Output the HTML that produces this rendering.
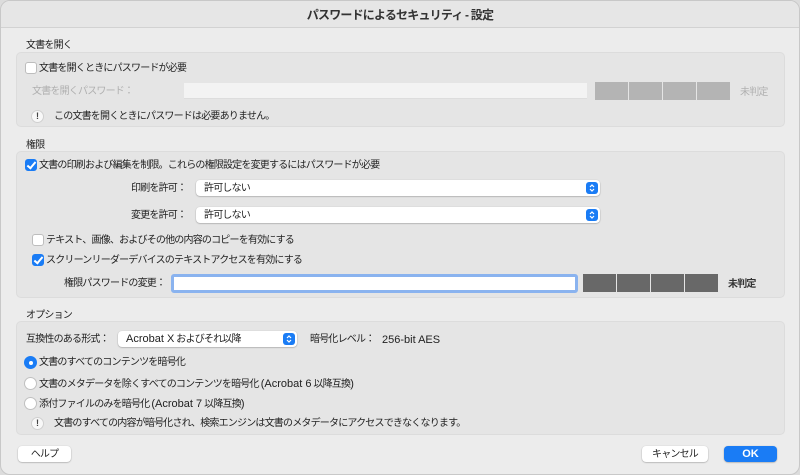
<!DOCTYPE html>
<html><head><meta charset="utf-8"><style>
*{box-sizing:border-box;margin:0;padding:0}
body{width:800px;height:475px;background:#dcdcdc;font-family:"Liberation Sans","Noto Sans CJK JP",sans-serif;font-size:10px;letter-spacing:-0.8px;color:#222;position:relative;overflow:hidden}
.win{position:absolute;left:0;top:0;width:800px;height:475px;background:#ececec;border:1px solid #c8c8c8;border-radius:10px;overflow:hidden}
.title{position:absolute;left:0;top:0;width:100%;height:27px;background:#e6e6e6;border-bottom:1px solid #d2d2d2;text-align:center;font-weight:bold;font-size:12px;line-height:28px;color:#333}
.a{position:absolute;white-space:nowrap;line-height:16px}
.l{letter-spacing:0;font-size:11px}
.box{position:absolute;left:15px;width:769px;background:#e5e5e5;border:1px solid #dcdcdc;border-radius:5px}
.cb{position:absolute;width:12px;height:12px;border-radius:3px;background:#fff;border:1px solid #bdbdbd}
.cb.on{background:#1a7cf5;border-color:#1a7cf5}
.cb.on:after{content:"";position:absolute;left:3px;top:0px;width:3px;height:7px;border:solid #fff;border-width:0 2px 2px 0;transform:rotate(40deg)}
.rd{position:absolute;width:13px;height:13px;border-radius:50%;background:#fff;border:1px solid #c0c0c0}
.rd.on{background:#1a7cf5;border-color:#1a7cf5}
.rd.on:after{content:"";position:absolute;left:3.5px;top:3.5px;width:4px;height:4px;border-radius:50%;background:#fff}
.sel{position:absolute;background:#fff;border-radius:4px;box-shadow:0 0.5px 1.5px rgba(0,0,0,.35);padding-left:8px;line-height:17px;height:16px}
.sel svg{position:absolute;right:2px;top:2px}
.bar{position:absolute;height:18px;width:33px}
.warn{position:absolute;width:13px;height:13px;border-radius:50%;background:#f8f8f8;border:1px solid #d0d0d0;font-size:9px;font-weight:bold;text-align:center;line-height:11px;color:#444;letter-spacing:0}
.btn{position:absolute;height:16px;border-radius:4px;background:#fff;box-shadow:0 0.5px 1.5px rgba(0,0,0,.35);text-align:center;line-height:17px}
.g{color:#b0b0b0}
</style></head><body><div class="win">
<div class="title">パスワードによるセキュリティ - 設定</div>

<div class="a" style="left:25px;top:37px">文書を開く</div>
<div class="box" style="top:51px;height:75px"></div>
<div class="cb" style="left:24px;top:61px"></div>
<div class="a" style="left:38px;top:60px">文書を開くときにパスワードが必要</div>
<div class="a g" style="left:31px;top:83px">文書を開くパスワード：</div>
<div class="a" style="left:183px;top:82px;width:403px;height:16px;background:#f3f3f3;border-bottom:1px solid #ddd"></div>
<div class="bar" style="left:594px;top:81px;background:#b4b4b4"></div>
<div class="bar" style="left:628px;top:81px;background:#b4b4b4"></div>
<div class="bar" style="left:662px;top:81px;background:#b4b4b4"></div>
<div class="bar" style="left:696px;top:81px;background:#b4b4b4"></div>
<div class="a g" style="left:739px;top:84px">未判定</div>
<div class="warn" style="left:30px;top:109px">!</div>
<div class="a" style="left:53px;top:108px">この文書を開くときにパスワードは必要ありません。</div>

<div class="a" style="left:25px;top:137px">権限</div>
<div class="box" style="top:150px;height:147px"></div>
<div class="cb on" style="left:24px;top:158px"></div>
<div class="a" style="left:38px;top:157px">文書の印刷および編集を制限。これらの権限設定を変更するにはパスワードが必要</div>
<div class="a" style="left:130px;top:180px">印刷を許可：</div>
<div class="sel" style="left:195px;top:179px;width:404px">許可しない<svg width="12" height="12" viewBox="0 0 12 12"><rect width="12" height="12" rx="3" fill="#1a7cf5"/><path d="M4 5 L6 3 L8 5 M4 7 L6 9 L8 7" stroke="#fff" stroke-width="1.2" fill="none"/></svg></div>
<div class="a" style="left:130px;top:207px">変更を許可：</div>
<div class="sel" style="left:195px;top:206px;width:404px">許可しない<svg width="12" height="12" viewBox="0 0 12 12"><rect width="12" height="12" rx="3" fill="#1a7cf5"/><path d="M4 5 L6 3 L8 5 M4 7 L6 9 L8 7" stroke="#fff" stroke-width="1.2" fill="none"/></svg></div>
<div class="cb" style="left:31px;top:233px"></div>
<div class="a" style="left:45px;top:232px">テキスト、画像、およびその他の内容のコピーを有効にする</div>
<div class="cb on" style="left:31px;top:253px"></div>
<div class="a" style="left:45px;top:252px">スクリーンリーダーデバイスのテキストアクセスを有効にする</div>
<div class="a" style="left:63px;top:275px">権限パスワードの変更：</div>
<div class="a" style="left:170px;top:273px;width:407px;height:19px;background:#fff;border:3px solid #8ab3ef;border-radius:3px"></div>
<div class="bar" style="left:582px;top:273px;background:#686868"></div>
<div class="bar" style="left:616px;top:273px;background:#686868"></div>
<div class="bar" style="left:650px;top:273px;background:#686868"></div>
<div class="bar" style="left:684px;top:273px;background:#686868"></div>
<div class="a" style="left:727px;top:276px;font-weight:bold;color:#333">未判定</div>

<div class="a" style="left:25px;top:307px">オプション</div>
<div class="box" style="top:320px;height:114px"></div>
<div class="a" style="left:25px;top:331px">互換性のある形式：</div>
<div class="sel" style="left:117px;top:330px;width:179px"><span class="l">Acrobat X</span> およびそれ以降<svg width="12" height="12" viewBox="0 0 12 12"><rect width="12" height="12" rx="3" fill="#1a7cf5"/><path d="M4 5 L6 3 L8 5 M4 7 L6 9 L8 7" stroke="#fff" stroke-width="1.2" fill="none"/></svg></div>
<div class="a" style="left:309px;top:331px">暗号化レベル：</div>
<div class="a l" style="left:381px;top:331px">256-bit AES</div>
<div class="rd on" style="left:23px;top:355px"></div>
<div class="a" style="left:38px;top:354px">文書のすべてのコンテンツを暗号化</div>
<div class="rd" style="left:23px;top:376px"></div>
<div class="a" style="left:38px;top:375px">文書のメタデータを除くすべてのコンテンツを暗号化 <span class="l">(Acrobat 6</span> 以降互換<span class="l">)</span></div>
<div class="rd" style="left:23px;top:396px"></div>
<div class="a" style="left:38px;top:395px">添付ファイルのみを暗号化 <span class="l">(Acrobat 7</span> 以降互換<span class="l">)</span></div>
<div class="warn" style="left:30px;top:416px">!</div>
<div class="a" style="left:53px;top:415px">文書のすべての内容が暗号化され、検索エンジンは文書のメタデータにアクセスできなくなります。</div>

<div class="btn" style="left:17px;top:445px;width:53px">ヘルプ</div>
<div class="btn" style="left:641px;top:445px;width:66px">キャンセル</div>
<div class="btn" style="left:723px;top:445px;width:53px;background:#1a7cf5;color:#fff;font-weight:bold;letter-spacing:0;font-size:11px">OK</div>
</div></body></html>
